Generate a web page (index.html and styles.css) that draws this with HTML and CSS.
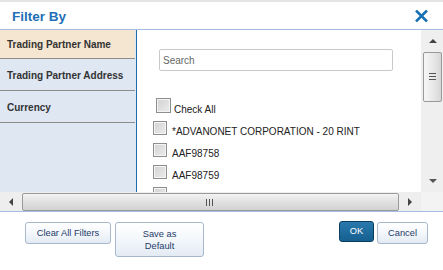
FILE: index.html
```html
<!DOCTYPE html>
<html>
<head>
<meta charset="utf-8">
<link rel="stylesheet" href="styles.css">
</head>
<body>
<div class="dialog">
  <div class="header">
    <h1 class="title">Filter By</h1>
    <button class="close" aria-label="Close">
      <svg width="13" height="12" viewBox="0 0 13 12"><path d="M1 0.5 L12 11.5 M12 0.5 L1 11.5" stroke="#1a72b6" stroke-width="2.6" fill="none"/></svg>
    </button>
  </div>
  <div class="body">
    <div class="main">
      <ul class="tabs">
        <li class="tab active">Trading Partner Name</li>
        <li class="tab tab-tall">Trading Partner Address</li>
        <li class="tab tab-tall">Currency</li>
      </ul>
      <div class="content">
        <input class="search" type="text" placeholder="Search">
        <div class="list">
          <label class="row check-all"><span class="box"></span><span class="label">Check All</span></label>
          <label class="row"><span class="box"></span><span class="label">*ADVANONET CORPORATION - 20 RINT</span></label>
          <label class="row"><span class="box"></span><span class="label">AAF98758</span></label>
          <label class="row"><span class="box"></span><span class="label">AAF98759</span></label>
          <label class="row"><span class="box"></span></label>
        </div>
      </div>
      <div class="vscroll">
        <div class="arrow-btn"><span class="tri tri-up"></span></div>
        <div class="vthumb"><span class="grip-h"></span></div>
        <div class="vtrack"></div>
        <div class="arrow-btn"><span class="tri tri-down"></span></div>
      </div>
    </div>
    <div class="hscroll-row">
      <div class="hscroll">
        <div class="harrow"><span class="tri tri-left"></span></div>
        <div class="hthumb"><span class="grip-v"></span></div>
        <div class="harrow"><span class="tri tri-right"></span></div>
      </div>
      <div class="corner"></div>
    </div>
  </div>
  <div class="footer">
    <div class="btn-group">
      <button class="btn">Clear All Filters</button>
      <button class="btn btn-wide">Save as<br>Default</button>
    </div>
    <div class="btn-group">
      <button class="btn btn-primary">OK</button>
      <button class="btn btn-cancel">Cancel</button>
    </div>
  </div>
</div>
</body>
</html>
```

FILE: styles.css
```css
* { box-sizing: border-box; }
html, body { margin: 0; padding: 0; background: #fff; }
body { font-family: "Liberation Sans", Arial, sans-serif; width: 443px; height: 270px; overflow: hidden; }

.dialog { border-top: 2px solid #e4e4e4; width: 443px; }

.header {
  height: 28px;
  border-bottom: 1px solid #a6bce0;
  display: flex;
  align-items: center;
  justify-content: space-between;
  padding: 0 15px 0 12px;
}
.title { margin: 0; font-size: 13.5px; font-weight: bold; color: #1e6fb5; line-height: 16px; padding-top: 2px; }
.close { border: 0; background: none; padding: 0; width: 13px; height: 12px; display: block; margin-top: 1px; }
.close svg { display: block; }

.main { display: flex; height: 162px; }

.tabs {
  list-style: none;
  margin: 0;
  padding: 0;
  width: 137px;
  flex: none;
  background: #dfe7f3;
  border-right: 1px solid #1f6aa8;
}
.tab {
  height: 32px;
  border-bottom: 1px solid #8c8c8c;
  font-size: 10px;
  font-weight: bold;
  color: #333;
  padding-left: 7px;
  display: flex;
  align-items: center;
  margin-right: 1px;
}
.tab.active { background: #f5e6d1; height: 29px; padding-top: 1px; }
.tab-tall { padding-top: 2px; }

.content {
  flex: 1;
  overflow: hidden;
  padding: 19px 0 0 22px;
}
.search {
  display: block;
  width: 234px;
  height: 22px;
  border: 1px solid #c9c9c9;
  border-radius: 2px;
  padding: 0 3px;
  font-family: "Liberation Sans", Arial, sans-serif;
  font-size: 10px;
  color: #333;
  outline: none;
}
.search::placeholder { color: #666; }

.list { padding-top: 27px; margin-left: -6px; }
.row { display: flex; align-items: flex-start; height: 22px; }
.row.check-all { margin-left: 3px; height: 23px; }
.row .box {
  width: 14px;
  height: 14px;
  border: 1px solid #8e8e8e;
  background: linear-gradient(135deg, #d2d2d2 0%, #ececec 100%);
  box-shadow: inset 0 0 0 1px #f4f4f4;
  flex: none;
}
.row.check-all .box { width: 15px; height: 15px; }
.row .label {
  font-size: 10px;
  color: #222;
  line-height: 10px;
  margin-left: 5px;
  margin-top: 6px;
  white-space: nowrap;
}
.row.check-all .label { margin-top: 7px; margin-left: 3px; }

.vscroll {
  width: 22px;
  flex: none;
  background: #efefef;
  display: flex;
  flex-direction: column;
  align-items: center;
  padding-left: 1px;
}
.arrow-btn { height: 22px; width: 100%; display: flex; align-items: center; justify-content: center; }
.vthumb {
  width: 19px;
  height: 50px;
  border: 1px solid #9a9a9a;
  border-radius: 2px;
  background: linear-gradient(90deg, #f6f6f6 0%, #e6e6e6 60%, #d6d6d6 100%);
  display: flex;
  align-items: center;
  justify-content: center;
}
.vtrack { flex: 1; }
.grip-h {
  width: 7px;
  height: 9px;
  background: repeating-linear-gradient(180deg, #555 0 1px, transparent 1px 3px);
}

.tri { width: 0; height: 0; display: block; }
.tri-up { border-left: 4px solid transparent; border-right: 4px solid transparent; border-bottom: 4px solid #444; }
.tri-down { border-left: 4px solid transparent; border-right: 4px solid transparent; border-top: 4px solid #555; }
.tri-left { border-top: 4px solid transparent; border-bottom: 4px solid transparent; border-right: 4px solid #444; }
.tri-right { border-top: 4px solid transparent; border-bottom: 4px solid transparent; border-left: 4px solid #444; }

.hscroll-row {
  display: flex;
  height: 20px;
  border-bottom: 1px solid #a6bce0;
}
.hscroll {
  width: 421px;
  background: #eeeeee;
  display: flex;
  align-items: center;
}
.harrow { width: 22px; height: 100%; display: flex; align-items: center; justify-content: center; }
.hthumb {
  flex: 1;
  height: 18px;
  border: 1px solid #9a9a9a;
  border-radius: 2px;
  background: linear-gradient(180deg, #f4f4f4 0%, #e2e2e2 45%, #d2d2d2 100%);
  display: flex;
  align-items: center;
  justify-content: center;
  margin-top: 1px;
}
.grip-v {
  width: 9px;
  height: 7px;
  background: repeating-linear-gradient(90deg, #555 0 1px, transparent 1px 3px);
}
.corner { flex: 1; background: #f3f3f3; }

.footer {
  display: flex;
  justify-content: space-between;
  align-items: flex-start;
  padding: 10px 15px 0 25px;
}
.btn-group { display: flex; gap: 4px; align-items: flex-start; }
.btn {
  font-family: "Liberation Sans", Arial, sans-serif;
  font-size: 9.3px;
  color: #1e3a6a;
  background: linear-gradient(180deg, #ffffff 0%, #f1f5fa 60%, #e3eaf3 100%);
  border: 1px solid #a8b8cc;
  border-radius: 3px;
  height: 22px;
  width: 86px;
  padding: 0;
  line-height: 12.5px;
  cursor: pointer;
}
.btn-wide { width: 89px; height: 35px; padding-top: 1px; }
.btn-primary {
  width: 35px;
  height: 21px;
  margin-top: -1px;
  background: linear-gradient(180deg, #2a78ad 0%, #15608f 100%);
  border: 1px solid #0c3d61;
  color: #fff;
}
.btn-cancel { width: 51px; margin-left: -1px; }
```
